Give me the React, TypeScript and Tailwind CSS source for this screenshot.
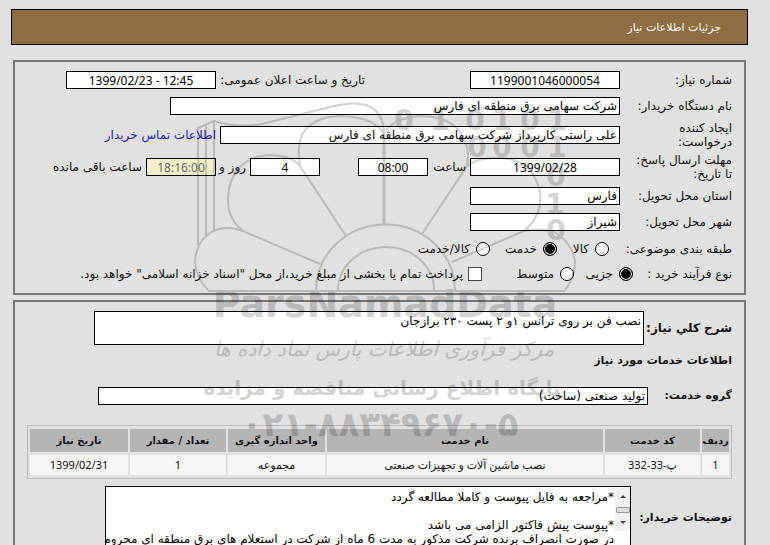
import type { ReactNode } from "react";

const box = "h-[18px] min-w-0 border border-black bg-white px-[2px] text-black outline-none";
const num = "text-center font-['Noto_Sans','DejaVu_Sans',sans-serif] text-[12px]";

function Row({ label, id, className, labelWidth = "w-[112px]", children }: {
  label: string;
  id?: string;
  className: string;
  labelWidth?: string;
  children: ReactNode;
}) {
  return (
    <div className={`flex items-center ${className}`}>
      {id ? (
        <label htmlFor={id} className={`${labelWidth} shrink-0 whitespace-pre-line`}>{label}</label>
      ) : (
        <span className={`${labelWidth} shrink-0`}>{label}</span>
      )}
      {children}
    </div>
  );
}

function Radio({ label, name, checked = false, className = "" }: {
  label: string;
  name: string;
  checked?: boolean;
  className?: string;
}) {
  return (
    <label className={`flex shrink-0 items-center gap-[6px] ${className}`}>
      <input
        type="radio"
        name={name}
        defaultChecked={checked}
        className="size-[14px] shrink-0 appearance-none rounded-full border border-black bg-white checked:bg-black checked:shadow-[inset_0_0_0_1px_white]"
      />
      {label}
    </label>
  );
}

function Watermark() {
  return (
    <svg
      dir="ltr"
      aria-hidden="true"
      width="400"
      height="360"
      viewBox="180 90 400 360"
      className="pointer-events-none absolute top-[90px] left-[180px] opacity-[0.17]"
    >
      <g fill="none" stroke="#000" strokeWidth="2">
        <path d="M208 290 Q196 278 195 262 Q196 245 206 236 Q216 227 230 228 Q238 229 243 231 L320 264" />
        <path d="M198 245V128L214 121V231M206 236V125" />
        <path d="M214 121Q235 128 262 124L330 107Q352 101 366 105Q383 111 384 132" />
        <path d="M243 231Q228 219 228 200Q228 180 240 167Q252 155 272 155Q292 156 300 166L346 236" />
        <path d="M300 166Q296 140 306 129Q318 116 342 116Q372 117 384 133" />
        <path strokeWidth="3" d="M384 130V225" />
        <path d="M386 130Q398 117 420 116Q448 116 460 132Q471 148 467 166L422 234" />
        <path d="M467 166Q478 157 500 158Q526 159 535 178Q544 196 538 212Q533 224 524 231L452 262" />
        <path d="M524 231Q548 226 560 236Q573 246 575 262Q575 278 565 290" />
        <path d="M316 290A69 65 0 0 1 455 290M338 290A48 43 0 0 1 434 290" />
        <path d="M208 291H565" />
      </g>
      <g className="font-['DejaVu_Sans',sans-serif] text-[28px] font-bold" textAnchor="middle">
        <text x="404 440 475 502 530 557" y="130">010101</text>
        <text x="477 502 530 557" y="157">0001</text>
        <text x="556" y="186">0</text>
        <text x="555" y="214">1</text>
        <text x="556" y="240">0</text>
      </g>
      <text x="385" y="317" textAnchor="middle" className="font-['DejaVu_Sans',sans-serif] text-[38px] font-bold">ParsNamadData</text>
      <g textAnchor="middle" direction="rtl" className="font-['DejaVu_Sans',sans-serif]">
        <text x="384" y="356" className="text-[20px] italic">مرکز فرآوری اطلاعات پارس نماد داده ها</text>
        <text x="382" y="395" className="text-[20px] font-bold">پایگاه اطلاع رسانی مناقصه و مزایده</text>
      </g>
      <text x="380" y="436" textAnchor="middle" className="font-['DejaVu_Sans',sans-serif] text-[34px] font-bold">۰۲۱-۸۸۳۴۹۶۷۰-۵</text>
    </svg>
  );
}

const columns = [
  { title: "ردیف", value: "1", width: "w-[27px]" },
  { title: "کد خدمت", value: "پ-33-332", width: "w-[95px]" },
  { title: "نام خدمت", value: "نصب ماشین آلات و تجهیزات صنعتی", width: "" },
  { title: "واحد اندازه گیری", value: "مجموعه", width: "w-[97px]" },
  { title: "تعداد / مقدار", value: "1", width: "w-[96px]" },
  { title: "تاریخ نیاز", value: "1399/02/31", width: "w-[98px]" },
];

export default function App() {
  return (
    <main
      dir="rtl"
      className="relative h-screen overflow-hidden bg-[#e1e1e1] pt-[9px] pr-[22px] pl-[11px] font-['DejaVu_Sans',sans-serif] text-[12px] leading-[14px] text-[#111]"
    >
      <h1 className="flex h-9 items-center border border-black bg-[#8f6d40] px-[26px] pt-[2px] text-[11px] text-white">
        جزئیات اطلاعات نیاز
      </h1>

      <section className="mt-[15px] mr-[2px] ml-[2px] h-[235px] border-2 border-t-[#777] border-r-[#777] border-b-[#777] border-l-[#777] px-3 pt-[5px]">
        <Row label="شماره نیاز:" id="number" className="h-[26px]">
          <input id="number" dir="ltr" readOnly defaultValue="1199001046000054" className={`${box} ${num} w-[150px]`} />
          <label htmlFor="announce" className="mr-auto w-[149px] whitespace-nowrap">تاریخ و ساعت اعلان عمومی:</label>
          <input id="announce" dir="ltr" readOnly defaultValue="1399/02/23 - 12:45" className={`${box} ${num} ml-[39px] w-[150px]`} />
        </Row>
        <Row label="نام دستگاه خریدار:" id="org" className="h-[26px]">
          <input id="org" readOnly defaultValue="شرکت سهامی برق منطقه ای فارس" className={`${box} w-[450px]`} />
        </Row>
        <Row label={"ایجاد کننده\nدرخواست:"} id="creator" className="h-8">
          <input id="creator" readOnly defaultValue="علی راستی کارپرداز شرکت سهامی برق منطقه ای فارس" className={`${box} w-[400px]`} />
          <a href="#contact" className="mr-1 whitespace-nowrap text-[#2222bb]">اطلاعات تماس خریدار</a>
        </Row>
        <Row label={"مهلت ارسال پاسخ:\nتا تاریخ:"} id="deadline" className="h-8">
          <input id="deadline" dir="ltr" readOnly defaultValue="1399/02/28" className={`${box} ${num} w-[150px]`} />
          <label htmlFor="hour" className="w-[42px] px-1">ساعت</label>
          <input id="hour" dir="ltr" readOnly defaultValue="08:00" className={`${box} ${num} w-[70px]`} />
          <input id="days" dir="ltr" readOnly defaultValue="4" className={`${box} ${num} mr-[38px] w-[70px]`} />
          <label htmlFor="days" className="w-[34px] px-1 whitespace-nowrap">روز و</label>
          <input id="left" dir="ltr" readOnly defaultValue="18:16:00" className="h-[18px] w-[70px] border border-black bg-[#f1f1c8] text-center font-['Noto_Sans',sans-serif] text-[12px] text-[#666] outline-none" />
          <label htmlFor="left" className="mr-1 whitespace-nowrap">ساعت باقی مانده</label>
        </Row>
        <Row label="استان محل تحویل:" id="province" className="h-[26px]">
          <input id="province" readOnly defaultValue="فارس" className={`${box} w-[150px]`} />
        </Row>
        <Row label="شهر محل تحویل:" id="city" className="h-[26px]">
          <input id="city" readOnly defaultValue="شیراز" className={`${box} w-[150px]`} />
        </Row>
        <Row label="طبقه بندی موضوعی:" labelWidth="w-[123px]" className="h-[28px]">
          <Radio name="kind" label="کالا" className="w-[52px]" />
          <Radio name="kind" label="خدمت" checked className="w-[67px]" />
          <Radio name="kind" label="کالا/خدمت" />
        </Row>
        <Row label="نوع فرآیند خرید :" labelWidth="w-[99px]" className="h-[22px]">
          <Radio name="process" label="جزیی" checked className="w-[59px]" />
          <Radio name="process" label="متوسط" className="w-[92px]" />
          <label className="flex items-center gap-[5px] whitespace-nowrap">
            <input type="checkbox" className="size-[14px] shrink-0 appearance-none border border-[#444] bg-white" />
            پرداخت تمام یا بخشی از مبلغ خرید،از محل "اسناد خزانه اسلامی" خواهد بود.
          </label>
        </Row>
      </section>

      <section className="mt-[5px] mr-[2px] ml-[2px] border-2 border-[#777] px-3 pt-[9px] pb-6">
        <div className="flex items-center">
          <label htmlFor="summary" className="w-[88px] shrink-0 text-[12px] font-bold whitespace-nowrap">شرح کلي نیاز:</label>
          <textarea id="summary" readOnly defaultValue="نصب فن بر روی ترانس ١و ٢ پست ٢٣٠ برازجان" className="ml-[67px] block h-[34px] flex-1 resize-none border border-black bg-white px-[2px] pt-[2px] text-black outline-none" />
        </div>
        <h2 className="mt-[9px] text-[11px] font-bold">اطلاعات خدمات مورد نیاز</h2>
        <div className="mt-[19px] flex items-center">
          <label htmlFor="group" className="w-[84px] shrink-0 text-[11px] font-bold">گروه خدمت:</label>
          <input id="group" readOnly defaultValue="تولید صنعتی (ساخت)" className={`${box} ml-[71px] flex-1`} />
        </div>
        <div className="mt-5">
          <table className="w-full table-fixed border-separate border-spacing-x-[2px] border-spacing-y-[3px] border border-[#bbb] text-center text-[11px]">
            <thead>
              <tr className="h-[23px] bg-[#b5b5b5]">
                {columns.map((c) => (
                  <th key={c.title} className={`${c.width} p-0 text-[10px] font-bold whitespace-nowrap`}>{c.title}</th>
                ))}
              </tr>
            </thead>
            <tbody>
              <tr className="h-5 bg-[#f6f6f6]">
                {columns.map((c) => (
                  <td key={c.title} className="p-0 font-['Noto_Sans','DejaVu_Sans',sans-serif] text-[11px]">{c.value}</td>
                ))}
              </tr>
            </tbody>
          </table>
        </div>
        <div className="mt-[7px] flex">
          <label htmlFor="notes" className="w-[101px] shrink-0 pt-[25px] text-[11px] font-bold whitespace-nowrap">توضیحات خریدار:</label>
          <div className="ml-[78px] flex h-[76px] flex-1 border border-black bg-white">
            <div aria-hidden="true" className="mt-px flex h-[43px] w-[15px] shrink-0 flex-col items-center justify-between bg-[#f0f0f0] py-[7px]">
              <span className="border-x-[3px] border-b-[3px] border-x-transparent border-b-[#444]" />
              <span className="h-[6px] w-[14px] rounded-[1px] border border-[#999] bg-[#ddd]" />
              <span className="border-x-[3px] border-t-[3px] border-x-transparent border-t-[#444]" />
            </div>
            <textarea
              id="notes"
              readOnly
              defaultValue={"*مراجعه به فایل پیوست و کاملا مطالعه گردد\n\n*پیوست پیش فاکتور الزامی می باشد\nدر صورت انصراف برنده شرکت مذکور به مدت 6 ماه از شرکت در استعلام های برق منطقه ای محروم"}
              className="block min-w-0 flex-1 resize-none overflow-hidden bg-transparent pt-[3px] pr-px whitespace-pre text-black outline-none"
            />
          </div>
        </div>
      </section>

      <Watermark />
    </main>
  );
}
